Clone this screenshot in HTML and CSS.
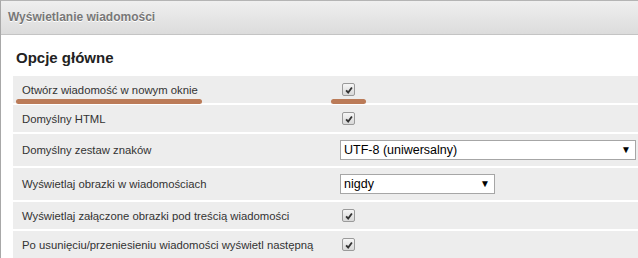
FILE: index.html
```html
<!DOCTYPE html>
<html lang="pl">
<head>
    <meta charset="UTF-8">
    <title>Wyświetlanie wiadomości</title>
    <link rel="stylesheet" href="styles.css">
</head>
<body>
    <div class="window">
        <!-- Title bar of the settings box -->
        <div class="titlebar">Wyświetlanie wiadomości</div>

        <div class="content">
            <h2>Opcje główne</h2>

            <div class="options">
                <div class="row">
                    <span class="label">Otwórz wiadomość w nowym oknie</span>
                    <span class="value"><span class="check"><svg viewBox="0 0 12 12" width="12" height="12"><path d="M2.5 6.5 L5 9 L9.5 3" fill="none" stroke="#333" stroke-width="2.2"/></svg></span></span>
                    <!-- annotation marks -->
                    <span class="mark mark-label"></span>
                    <span class="mark mark-value"></span>
                </div>
                <div class="row">
                    <span class="label">Domyślny HTML</span>
                    <span class="value"><span class="check"><svg viewBox="0 0 12 12" width="12" height="12"><path d="M2.5 6.5 L5 9 L9.5 3" fill="none" stroke="#333" stroke-width="2.2"/></svg></span></span>
                </div>
                <div class="row row-select">
                    <span class="label">Domyślny zestaw znaków</span>
                    <span class="value"><span class="select select-wide">UTF-8 (uniwersalny)<span class="arrow">&#9660;</span></span></span>
                </div>
                <div class="row row-select">
                    <span class="label">Wyświetlaj obrazki w wiadomościach</span>
                    <span class="value"><span class="select select-short">nigdy<span class="arrow">&#9660;</span></span></span>
                </div>
                <div class="row">
                    <span class="label">Wyświetlaj załączone obrazki pod treścią wiadomości</span>
                    <span class="value"><span class="check"><svg viewBox="0 0 12 12" width="12" height="12"><path d="M2.5 6.5 L5 9 L9.5 3" fill="none" stroke="#333" stroke-width="2.2"/></svg></span></span>
                </div>
                <div class="row">
                    <span class="label">Po usunięciu/przeniesieniu wiadomości wyświetl następną</span>
                    <span class="value"><span class="check"><svg viewBox="0 0 12 12" width="12" height="12"><path d="M2.5 6.5 L5 9 L9.5 3" fill="none" stroke="#333" stroke-width="2.2"/></svg></span></span>
                </div>
            </div>
        </div>
    </div>
</body>
</html>
```

FILE: styles.css
```css
/* Page base */
body {
    margin: 0;
    font-family: 'Liberation Sans', Arial, sans-serif;
    background-color: #fff;
    overflow: hidden;
}
/* Settings box */
.window {
    border-top: 1px solid #b4b4b4;
    border-left: 1px solid #a8a8a8;
    height: 257px;
}
.titlebar {
    height: 33px;
    line-height: 33px;
    padding-left: 7px;
    font-size: 12px;
    font-weight: bold;
    color: #777;
    text-shadow: 0 1px 0 #fff;
    background: linear-gradient(#efefef, #dcdcdc);
    border-bottom: 1px solid #c4c4c4;
}
.content {
    padding-left: 12px;
}
h2 {
    margin: 14px 0 9px 3px;
    font-size: 15px;
    line-height: 18px;
    color: #222;
}
/* Option rows */
.options {
    display: flex;
    flex-direction: column;
    gap: 2px;
}
.row {
    position: relative;
    display: grid;
    grid-template-columns: 327px 1fr;
    align-items: center;
    height: 27px;
    background-color: #ededed;
}
.row-select {
    height: 32px;
}
.label {
    padding-left: 9px;
    font-size: 11.3px;
    color: #333;
}
.value {
    display: flex;
    align-items: center;
}
/* Gray checkbox */
.check {
    display: flex;
    align-items: center;
    justify-content: center;
    width: 11px;
    height: 11px;
    margin-left: 2px;
    border: 1px solid #9a9a9a;
    border-radius: 2px;
    background: linear-gradient(#f6f6f6, #d8d8d8);
}
.check svg {
    width: 10px;
    height: 10px;
}
/* Drop-down boxes */
.select {
    position: relative;
    box-sizing: border-box;
    height: 20px;
    line-height: 18px;
    padding-left: 3px;
    font-size: 12.5px;
    color: #000;
    background-color: #fff;
    border: 1px solid #a6a6a6;
}
.select-wide {
    width: 296px;
}
.select-short {
    width: 155px;
}
.arrow {
    position: absolute;
    right: 4px;
    top: 0;
    font-size: 10px;
}
/* Orange annotation underlines */
.mark {
    position: absolute;
    top: 23px;
    height: 5px;
    border-radius: 3px;
    background-color: #bb7b58;
}
.mark-label {
    left: 3px;
    width: 186px;
}
.mark-value {
    left: 318px;
    width: 35px;
}
```
